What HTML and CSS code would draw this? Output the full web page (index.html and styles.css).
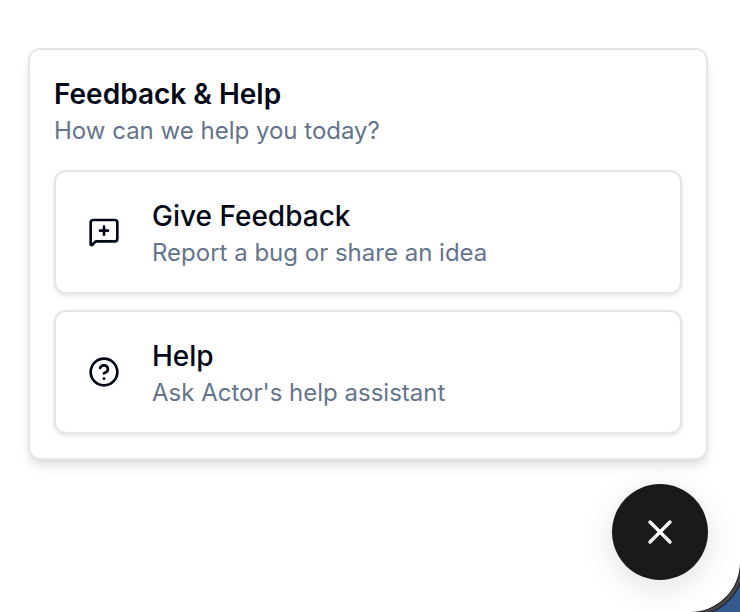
FILE: index.html
```html
<!DOCTYPE html>
<html lang="en">
<head>
  <meta charset="UTF-8">
  <meta name="viewport" content="width=device-width, initial-scale=1.0">
  <title>Feedback &amp; Help</title>
  <link rel="stylesheet" href="styles.css">
</head>
<body>
  <main class="window">
    <section class="panel">
      <h1 class="title">Feedback &amp; Help</h1>
      <p class="subtitle">How can we help you today?</p>

      <div class="options">
        <button class="option" type="button">
          <svg class="icon" viewBox="0 0 24 24" aria-hidden="true">
            <path d="M2 21.500V5a2 2 0 0 1 2-2h16a2 2 0 0 1 2 2v12a2 2 0 0 1-2 2H6.500a2 2 0 0 0-1.500.7L3.400 21.500A.8.8 0 0 1 2 21Z"/>
            <path d="M12 8v6M9 11h6"/>
          </svg>
          <span class="option-text">
            <span class="option-title">Give Feedback</span>
            <span class="subtitle">Report a bug or share an idea</span>
          </span>
        </button>
        <button class="option" type="button">
          <svg class="icon" viewBox="0 0 24 24" aria-hidden="true">
            <circle cx="12" cy="12" r="10"/>
            <path d="M9.090 9a3 3 0 0 1 5.830 1c0 2-3 3-3 3M12 17h.01"/>
          </svg>
          <span class="option-text">
            <span class="option-title">Help</span>
            <span class="subtitle">Ask Actor's help assistant</span>
          </span>
        </button>
      </div>
    </section>

    <button class="btn-close" type="button" aria-label="Close">
      <svg class="icon-close" viewBox="0 0 24 24" aria-hidden="true">
        <path d="M18 6 6 18M6 6l12 12"/>
      </svg>
    </button>
  </main>
</body>
</html>
```

FILE: styles.css
```css
* {
  box-sizing: border-box;
}
body {
  margin: 0;
  font-family: Inter, sans-serif;
  color: #020817;
  background: #355a90;
}
.window {
  display: flex;
  flex-direction: column;
  gap: 24px;
  min-height: 100vh;
  padding: 48px 32px 32px 28px;
  background: #fff;
  border-bottom-right-radius: 50px;
  box-shadow: 0 0 0 1px #222, 0 0 0 4px #45484b, 0 0 0 5px #1a1e26;
}
.panel {
  padding: 24px;
  border: 2px solid #e5e5ea;
  border-radius: 12px;
  background: #fff;
  box-shadow: 0 8px 12px -2px rgba(0,0,0,0.1), 0 4px 8px -4px rgba(0,0,0,0.1);
}
.title, .option-title {
  margin: 0;
  font-size: 28px;
  line-height: 41px;
  font-weight: 600;
}
.option-title {
  font-weight: 500;
}
.subtitle {
  margin: 0;
  font-size: 24px;
  line-height: 31px;
  color: #64748b;
}
.options {
  display: flex;
  flex-direction: column;
  gap: 16px;
  margin-top: 24px;
}
.option {
  display: flex;
  align-items: center;
  gap: 32px;
  width: 100%;
  padding: 24px 32px;
  border: 2px solid #e5e5ea;
  border-radius: 12px;
  background: #fff;
  color: inherit;
  font: inherit;
  text-align: left;
  box-shadow: 0 2px 4px rgba(0,0,0,0.1);
  cursor: pointer;
}
.option-text {
  display: flex;
  flex-direction: column;
}
.icon, .icon-close {
  flex: none;
  width: 32px;
  height: 32px;
  fill: none;
  stroke: currentColor;
  stroke-width: 2;
  stroke-linecap: round;
  stroke-linejoin: round;
}
.icon-close {
  width: 40px;
  height: 40px;
}
.btn-close {
  display: flex;
  align-items: center;
  justify-content: center;
  align-self: flex-end;
  width: 96px;
  height: 96px;
  padding: 0;
  border: none;
  border-radius: 50%;
  background: #1a1a1a;
  color: #fff;
  box-shadow: 0 8px 32px rgba(0,0,0,0.12);
  cursor: pointer;
}
```
